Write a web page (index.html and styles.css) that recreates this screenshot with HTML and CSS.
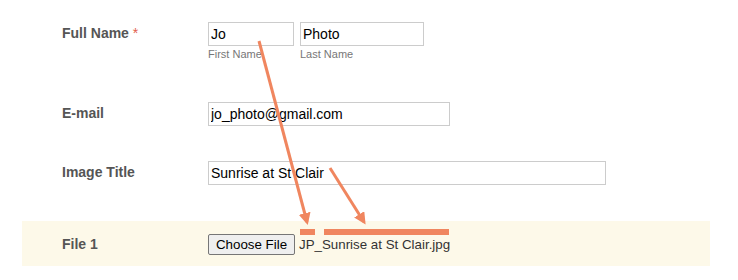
FILE: index.html
```html
<!DOCTYPE html>
<html lang="en">
<head>
    <meta charset="UTF-8">
    <meta name="viewport" content="width=device-width, initial-scale=1.0">
    <title>Photo Submission</title>
    <link rel="stylesheet" href="styles.css">
</head>
<body>
    <form class="form">
        <!-- Name -->
        <div class="row row-name">
            <label class="row-label">Full Name <span class="req">*</span></label>
            <div class="row-field">
                <div class="name-part">
                    <input type="text" class="text-input input-first" value="Jo">
                    <span class="sub-label">First Name</span>
                </div>
                <div class="name-part">
                    <input type="text" class="text-input input-last" value="Photo">
                    <span class="sub-label">Last Name</span>
                </div>
            </div>
        </div>

        <!-- E-mail -->
        <div class="row row-email">
            <label class="row-label">E-mail</label>
            <div class="row-field">
                <input type="text" class="text-input input-email" value="jo_photo@gmail.com">
            </div>
        </div>

        <!-- Titel -->
        <div class="row row-title">
            <label class="row-label">Image Title</label>
            <div class="row-field">
                <input type="text" class="text-input input-title" value="Sunrise at St Clair">
            </div>
        </div>

        <!-- Datei -->
        <div class="row row-file">
            <label class="row-label">File 1</label>
            <div class="row-field file-field">
                <button type="button" class="file-btn">Choose File</button>
                <span class="file-name">JP_Sunrise at St Clair.jpg</span>
            </div>
        </div>
    </form>

    <!-- Markierungen über dem Formular -->
    <svg class="annotations" width="738" height="280" viewBox="0 0 738 280">
        <defs>
            <marker id="head" markerWidth="4" markerHeight="4" refX="3" refY="2" orient="auto" markerUnits="strokeWidth">
                <path d="M0,0 L4,2 L0,4 Z" fill="#f0865f"/>
            </marker>
        </defs>
        <line x1="259" y1="41" x2="307" y2="222" stroke="#f0865f" stroke-width="3" marker-end="url(#head)"/>
        <line x1="330" y1="168" x2="364" y2="222" stroke="#f0865f" stroke-width="3" marker-end="url(#head)"/>
        <rect x="300" y="229" width="15" height="6" fill="#f0865f"/>
        <rect x="324" y="229" width="125" height="6" fill="#f0865f"/>
    </svg>
</body>
</html>
```

FILE: styles.css
```css
body {
    margin: 0;
    background: #ffffff;
    font-family: "Liberation Sans", Arial, sans-serif;
    position: relative;
    width: 738px;
    height: 280px;
    overflow: hidden;
}

.form {
    margin: 0 0 0 22px;
    width: 688px;
    padding-top: 22px;
}

.row {
    display: flex;
    align-items: flex-start;
    padding: 0 40px;
}

.row-label {
    width: 146px;
    flex-shrink: 0;
    font-size: 14px;
    font-weight: bold;
    line-height: 22px;
    color: #555555;
}

.req {
    color: #e2604d;
    font-weight: normal;
}

.row-field {
    display: flex;
    gap: 6px;
}

.name-part {
    display: flex;
    flex-direction: column;
}

.text-input {
    box-sizing: border-box;
    height: 24px;
    margin: 0;
    padding: 0 2px;
    border: 1px solid #cccccc;
    border-radius: 0;
    font-family: "Liberation Sans", Arial, sans-serif;
    font-size: 14px;
    color: #000000;
    background: #ffffff;
}

.input-first {
    width: 86px;
}

.input-last {
    width: 124px;
}

.input-email {
    width: 242px;
}

.input-title {
    width: 398px;
}

.sub-label {
    margin-top: 2px;
    font-size: 11px;
    line-height: 13px;
    color: #777777;
}

.row-email {
    margin-top: 41px;
}

.row-title {
    margin-top: 35px;
}

.row-file {
    margin-top: 36px;
    height: 45px;
    align-items: center;
    background: #fdf9e9;
}

.row-file .row-label {
    line-height: 16px;
}

.file-field {
    align-items: center;
    gap: 4px;
    padding-top: 2px;
}

.file-btn {
    box-sizing: border-box;
    width: 87px;
    height: 21px;
    margin: 0;
    padding: 0 6px;
    border: 1px solid #767676;
    border-radius: 2px;
    background: #efefef;
    font-family: "Liberation Sans", Arial, sans-serif;
    font-size: 13.33px;
    color: #000000;
}

.file-name {
    font-size: 13.33px;
    color: #333333;
}

.annotations {
    position: absolute;
    left: 0;
    top: 0;
    pointer-events: none;
}
```
